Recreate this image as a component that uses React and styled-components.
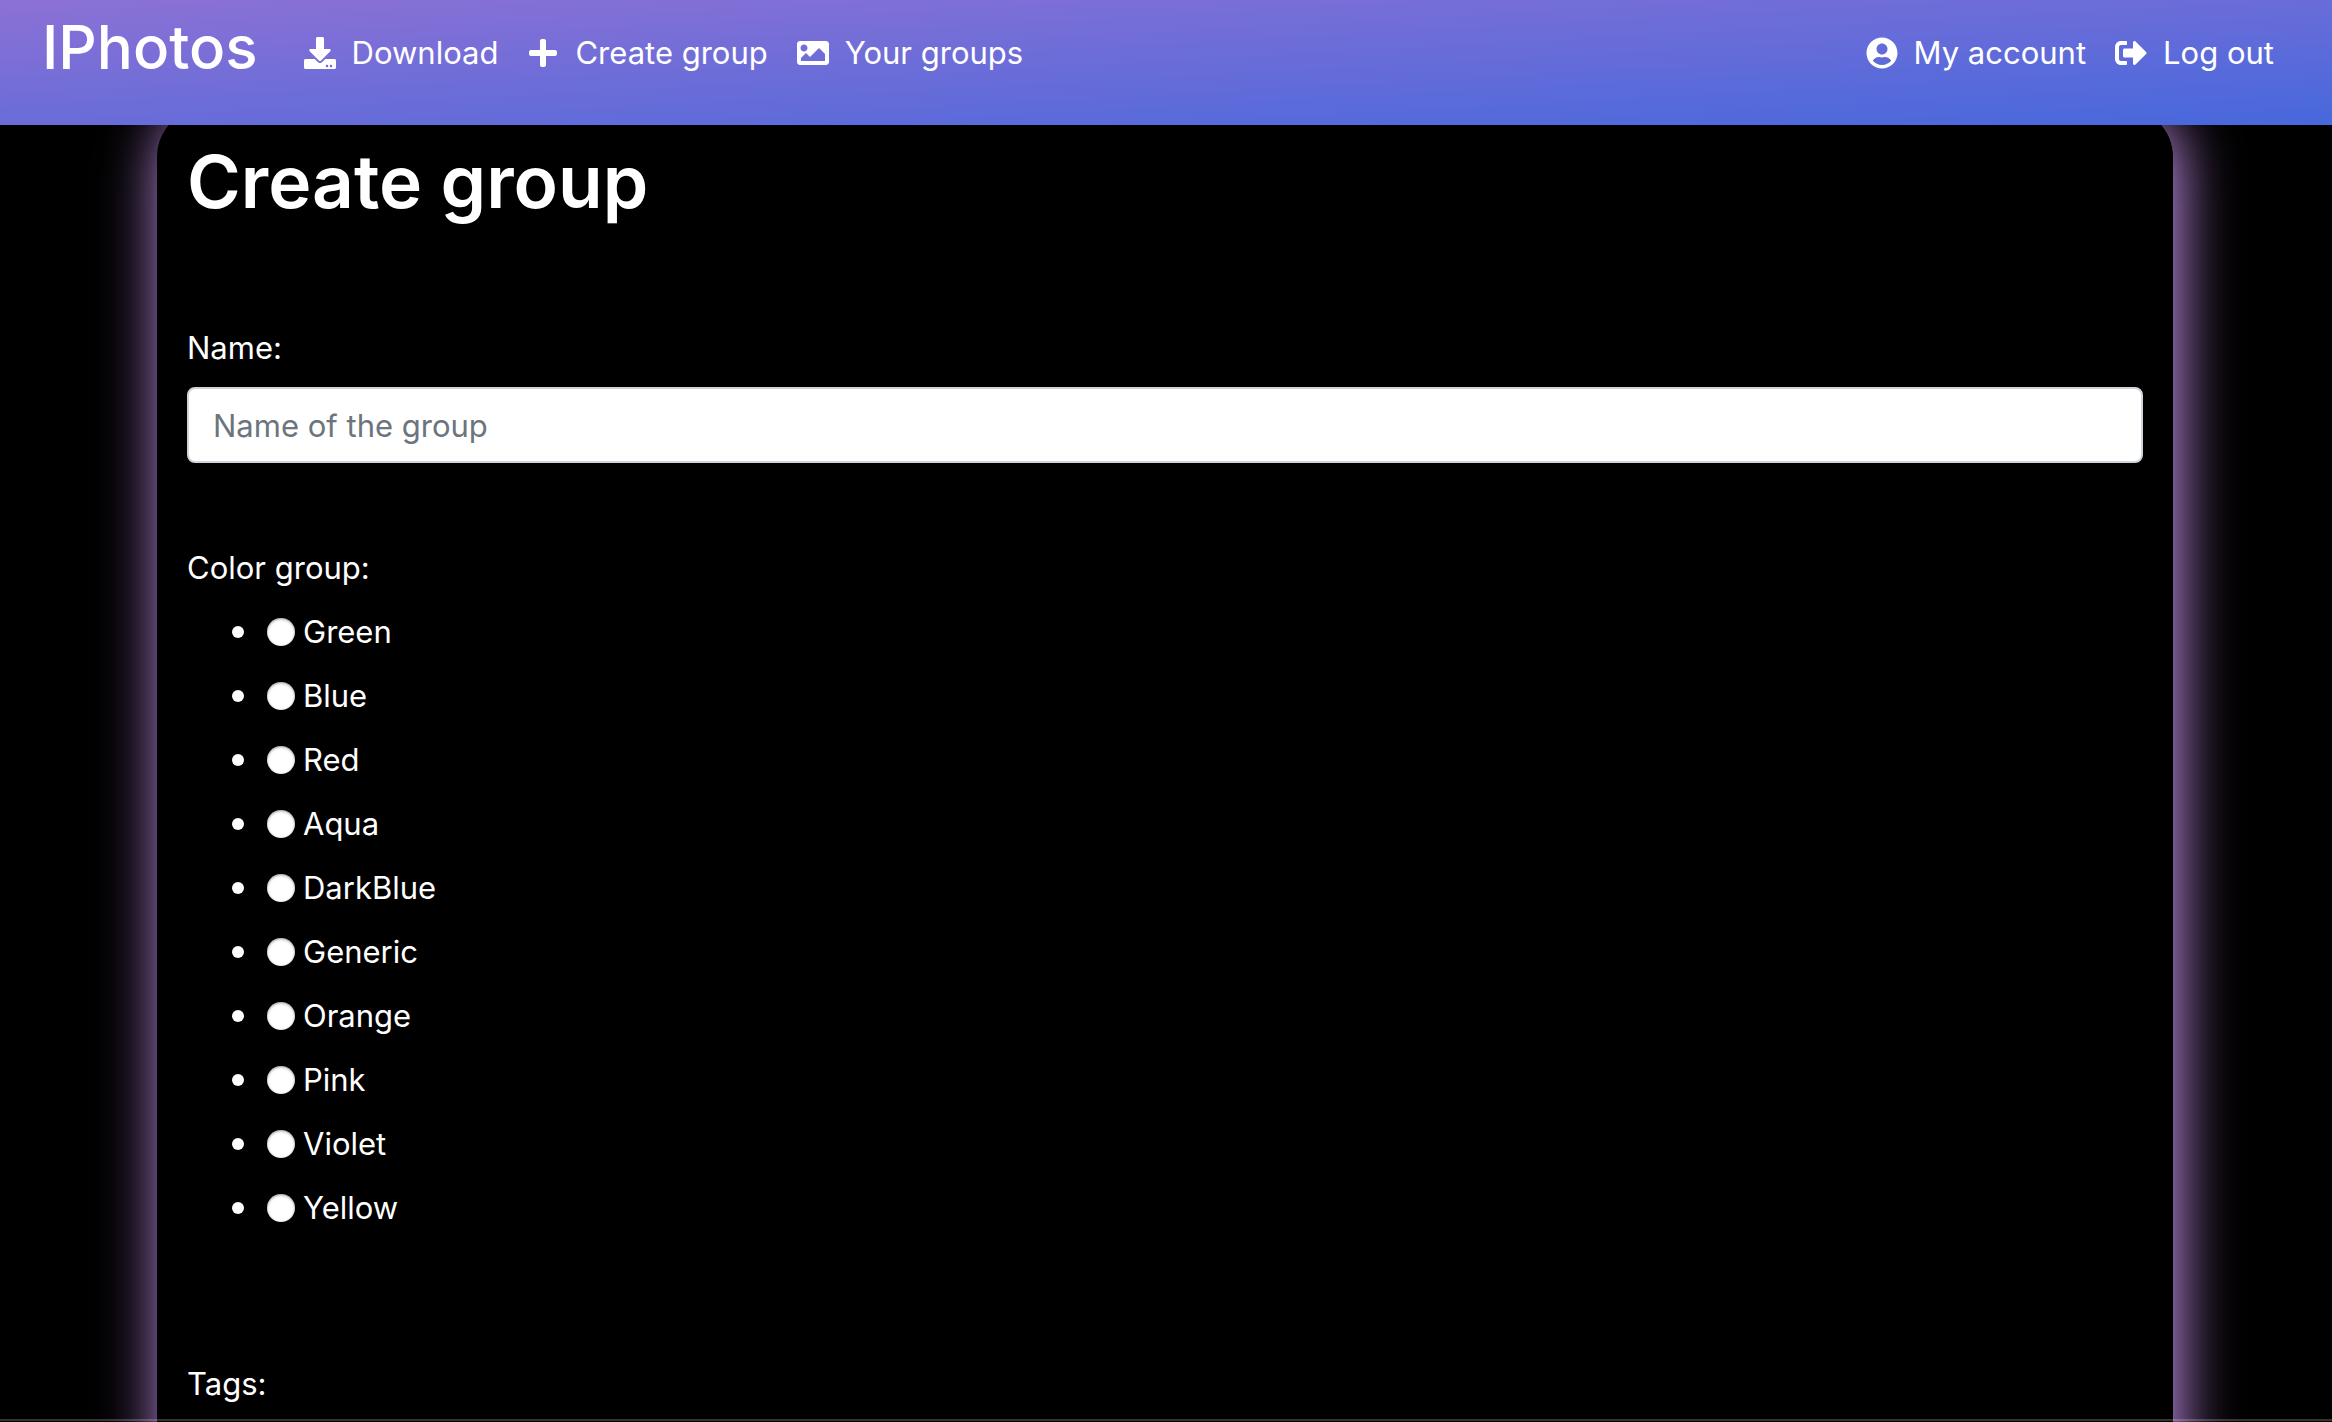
import React from "react";
import styled, { createGlobalStyle } from "styled-components";
import {
  FaDownload,
  FaPlus,
  FaImage,
  FaUserCircle,
  FaSignOutAlt,
} from "react-icons/fa";

const GlobalStyle = createGlobalStyle`
  *, *::before, *::after {
    box-sizing: border-box;
  }

  body {
    margin: 0;
    background: #000;
    color: #fff;
    font-family: Inter, "Liberation Sans", sans-serif;
    font-size: 31px;
    line-height: 48px;
  }
`;

const Page = styled.div`
  height: 100vh;
  overflow: hidden;
`;

const NavBar = styled.header`
  position: relative;
  z-index: 1;
  display: flex;
  align-items: flex-start;
  height: 125px;
  padding: 0 58px 0 42px;
  background: linear-gradient(to bottom right, #8c71d5, #4768dc);
`;

const Brand = styled.a`
  margin-right: 46px;
  font-size: 60px;
  font-weight: 500;
  line-height: 94px;
  color: #fff;
  text-decoration: none;
`;

const NavGroup = styled.nav`
  display: flex;
  gap: 29px;
  padding-top: 29px;
  margin-left: ${(p) => (p.$end ? "auto" : "0")};
`;

const NavLink = styled.a`
  display: flex;
  align-items: center;
  gap: 16px;
  color: #fff;
  text-decoration: none;

  svg {
    width: auto;
    height: 32px;
  }
`;

const Card = styled.main`
  margin: -18px 159px 0 157px;
  padding: 27px 30px 128px;
  border-radius: 50px;
  background: #000;
  box-shadow: 5px 5px 60px #d099f8;
`;

const Title = styled.h1`
  margin: 0 0 94px;
  font-size: 73px;
  font-weight: 600;
  line-height: 96px;
`;

const Field = styled.div`
  margin-bottom: 81px;
`;

const Label = styled.label`
  display: block;
  margin-bottom: 15px;
`;

const TextInput = styled.input`
  display: block;
  width: 100%;
  height: 76px;
  padding: 12px 24px;
  border: 2px solid #ced4da;
  border-radius: 8px;
  background: #fff;
  color: #212529;
  font: inherit;

  &::placeholder {
    color: #6c757d;
    opacity: 1;
  }
`;

const ColorGroup = styled.fieldset`
  min-width: 0;
  margin: 0 0 128px;
  padding: 0;
  border: 0;
`;

const Legend = styled.legend`
  padding: 0 0 16px;
`;

const ColorList = styled.ul`
  display: flex;
  flex-direction: column;
  gap: 16px;
  margin: 0;
  padding: 0 0 0 45px;
  list-style: none;
`;

const ColorItem = styled.li`
  display: flex;
  align-items: center;
  gap: 23px;

  &::before {
    content: "";
    width: 12px;
    height: 12px;
    border-radius: 50%;
    background: #fff;
  }
`;

const RadioLabel = styled.label`
  display: flex;
  align-items: center;
  gap: 8px;
`;

const Radio = styled.input`
  appearance: none;
  width: 28px;
  height: 28px;
  margin: 0;
  border-radius: 50%;
  background: #fff;
  box-shadow: inset 0 1px 3px rgba(0, 0, 0, 0.4);

  &:checked {
    border: 8px solid #4768dc;
  }
`;

const BottomRule = styled.div`
  position: fixed;
  right: 0;
  bottom: 1px;
  left: 0;
  height: 2px;
  background: rgba(255, 255, 255, 0.2);
`;

const mainLinks = [
  { text: "Download", Icon: FaDownload },
  { text: "Create group", Icon: FaPlus },
  { text: "Your groups", Icon: FaImage },
];

const accountLinks = [
  { text: "My account", Icon: FaUserCircle },
  { text: "Log out", Icon: FaSignOutAlt },
];

const colors = [
  "Green",
  "Blue",
  "Red",
  "Aqua",
  "DarkBlue",
  "Generic",
  "Orange",
  "Pink",
  "Violet",
  "Yellow",
];

function Links({ items, end }) {
  return (
    <NavGroup $end={end} aria-label={end ? "Account" : "Main"}>
      {items.map(({ text, Icon }) => (
        <NavLink key={text} href="#">
          <Icon aria-hidden="true" />
          {text}
        </NavLink>
      ))}
    </NavGroup>
  );
}

export default function App() {
  return (
    <Page>
      <GlobalStyle />
      <NavBar>
        <Brand href="#">IPhotos</Brand>
        <Links items={mainLinks} />
        <Links items={accountLinks} end />
      </NavBar>
      <Card>
        <Title>Create group</Title>
        <form>
          <Field>
            <Label htmlFor="group-name">Name:</Label>
            <TextInput
              id="group-name"
              type="text"
              placeholder="Name of the group"
            />
          </Field>
          <ColorGroup>
            <Legend>Color group:</Legend>
            <ColorList>
              {colors.map((color) => (
                <ColorItem key={color}>
                  <RadioLabel>
                    <Radio type="radio" name="color" value={color} />
                    {color}
                  </RadioLabel>
                </ColorItem>
              ))}
            </ColorList>
          </ColorGroup>
          <div>Tags:</div>
        </form>
      </Card>
      <BottomRule />
    </Page>
  );
}
